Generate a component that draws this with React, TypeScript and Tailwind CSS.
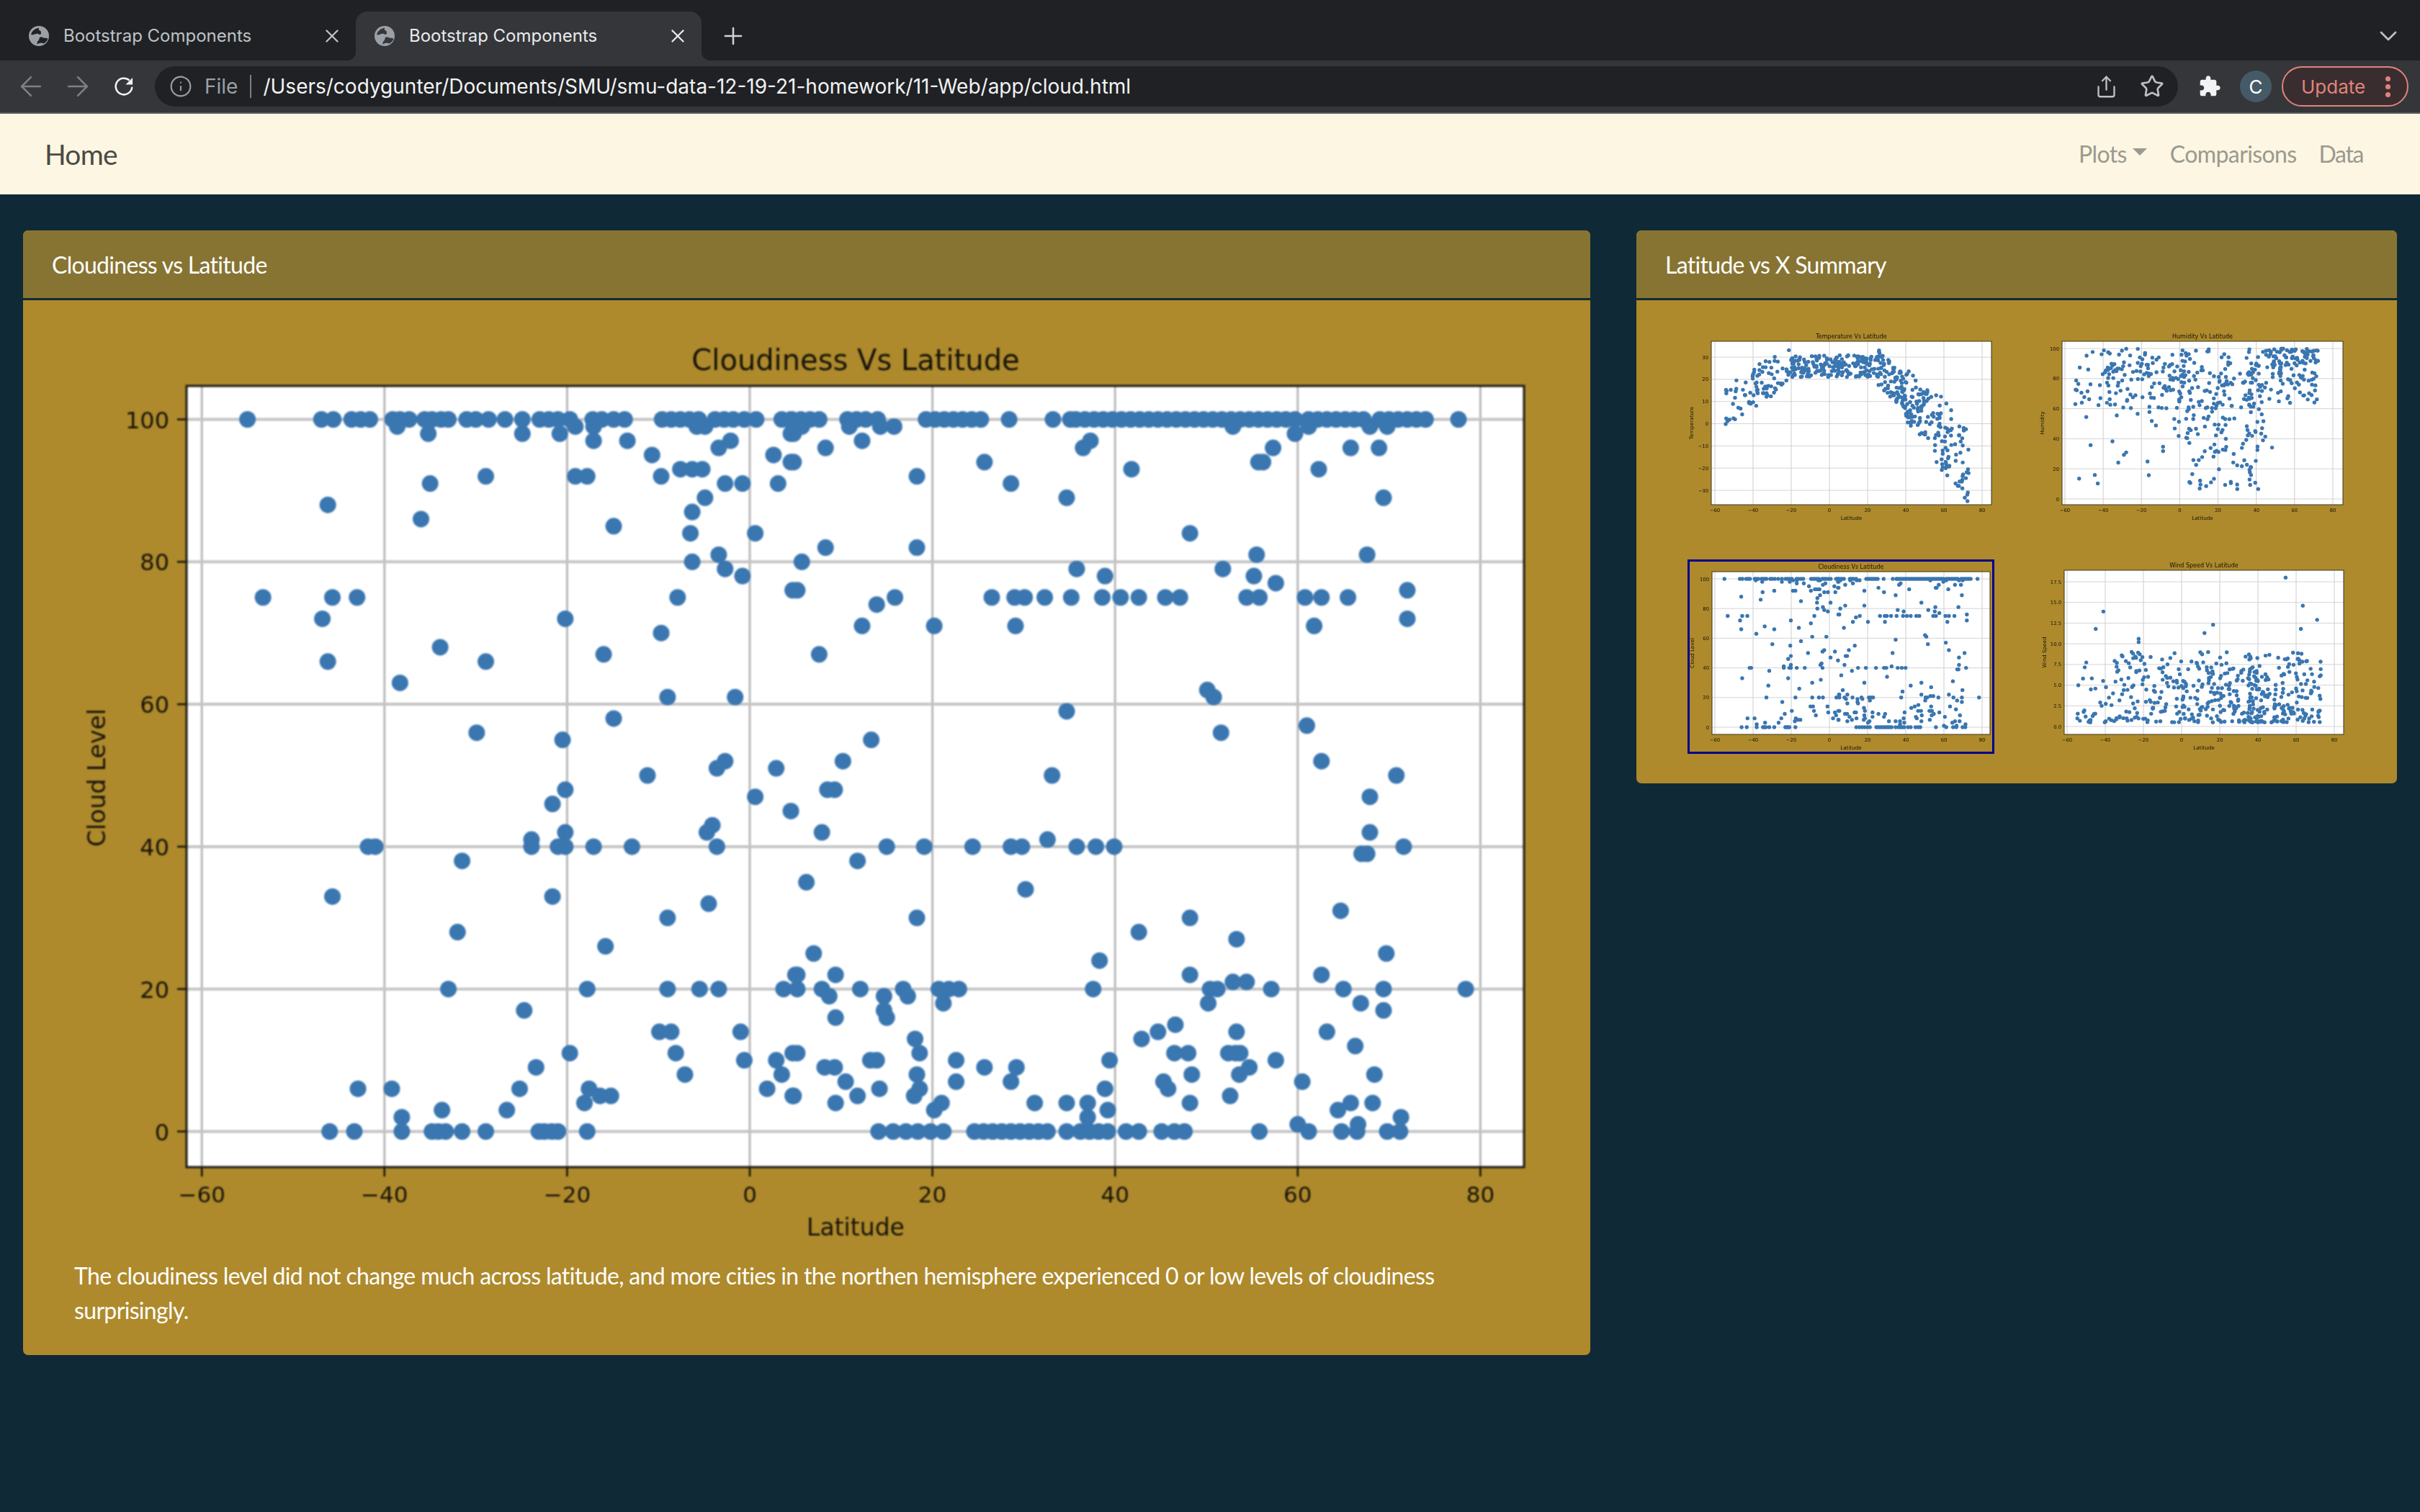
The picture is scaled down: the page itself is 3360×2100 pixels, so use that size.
import { ArrowLeft, ArrowRight, ChevronDown, Info, Plus, Share, Star, X } from "lucide-react";

const TICK_COLOR = "#16130a";
const DOT_COLOR = "#3a76b0";
const CHART_FONT = "DejaVu Sans";

const run = (from: number, to: number, step: number) => {
  const out: number[] = [];
  for (let v = from; v <= to; v += step) out.push(v);
  return out;
};

// cloud level -> latitudes, read off the plotted city data
const CLOUD_ROWS: [number, number[]][] = [
  [100, [-55, -46.9, -45.6, -43.6, -42.6, -41.6, -39.1, -38.3, -37.3, -35.6, -34.8, -33.8, -33, -31, -30, -28.6, -26.8, -24.9, -23, -22, -21, -19.7, -17.2, -16.2, -14.9, -13.7, -9.6, -8.6, -7.6, -6.6, -5.6, -3.8, -2.8, -1.8, -0.6, 0.7, 3.5, 4.5, ...run(4.6, 8.2, 1), ...run(10.7, 12.9, 1), 14, ...run(19.3, 25.7, 1), 28.4, 33.2, 35.1, ...run(35.7, 60, 1), ...run(61.2, 67.9, 1), ...run(69, 74.6, 1), 77.6]],
  [99, [-38.6, -19.1, -17.1, -5.8, -4.9, 4.8, 5.7, 10.9, 14.3, 15.8, 52.9, 61.2, 67.9, 69.8]],
  [98, [-35.2, -24.9, -20.8, 4.5, 4.8, 59.7]],
  [97, [-17.1, -13.4, -2.1, 12.3, 37.3]],
  [96, [-3.4, 8.3, 36.5, 57.3, 65.8, 68.9]],
  [95, [-10.7, 2.6]],
  [94, [4.5, 4.8, 25.7, 55.7, 56.2]],
  [93, [-7.6, -6.3, -5.2, 41.8, 62.3]],
  [92, [-28.9, -19.1, -17.8, -9.7, 18.3]],
  [91, [-35, -2.7, -0.8, 3.1, 28.6]],
  [89, [-4.9, 34.7, 69.4]],
  [88, [-46.2]],
  [87, [-6.3]],
  [86, [-36]],
  [85, [-14.9]],
  [84, [-6.5, 0.6, 48.2]],
  [82, [8.3, 18.3]],
  [81, [-3.4, 55.5, 67.6]],
  [80, [-6.3, 5.7]],
  [79, [-2.7, 35.8, 51.8]],
  [78, [-0.8, 38.9, 55.2]],
  [77, [57.6]],
  [76, [4.7, 5.2, 72]],
  [75, [-53.3, -45.7, -43, -7.9, 15.9, 26.5, 29, 30.1, 32.3, 35.2, 38.6, 40.6, 42.6, 45.5, 47.1, 54.4, 55.8, 60.8, 62.6, 65.5]],
  [74, [13.9]],
  [72, [-46.8, -20.2, 72]],
  [71, [12.3, 20.2, 29.1, 61.8]],
  [70, [-9.7]],
  [68, [-33.9]],
  [67, [-16, 7.6]],
  [66, [-46.2, -28.9]],
  [63, [-38.3]],
  [62, [50.1]],
  [61, [-9, -1.6, 50.8]],
  [59, [34.7]],
  [58, [-14.9]],
  [57, [61]],
  [56, [-29.9, 51.6]],
  [55, [-20.5, 13.3]],
  [52, [-2.7, 10.2, 62.6]],
  [51, [-3.6, 2.9]],
  [50, [-11.2, 33.1, 70.8]],
  [48, [-20.2, 8.5, 9.3]],
  [47, [0.6, 67.9]],
  [46, [-21.6]],
  [45, [4.5]],
  [43, [-4.1]],
  [42, [-20.2, -4.7, 7.9, 67.9]],
  [41, [-23.9, 32.6]],
  [40, [-41.8, -41, -23.9, -21, -20.2, -17.1, -12.9, -3.6, 15, 19.1, 24.4, 28.6, 29.8, 35.8, 37.9, 39.9, 71.6]],
  [39, [67, 67.6]],
  [38, [-31.5, 11.8]],
  [35, [6.2]],
  [34, [30.2]],
  [33, [-45.7, -21.6]],
  [32, [-4.5]],
  [31, [64.7]],
  [30, [-9, 18.3, 48.2]],
  [28, [-32, 42.6]],
  [27, [53.3]],
  [26, [-15.8]],
  [25, [7, 69.7]],
  [24, [38.3]],
  [22, [5, 5.2, 9.4, 48.2, 62.6]],
  [21, [52.9, 54.4]],
  [20, [-33, -17.8, -9, -5.5, -3.4, 3.7, 5.2, 7.9, 12.1, 16.8, 20.7, 21.8, 22.9, 37.6, 50.4, 51.2, 57.1, 65, 69.4, 78.4]],
  [19, [8.7, 14.7, 17.3]],
  [18, [21.2, 50.2, 66.9]],
  [17, [-24.7, 14.7, 69.4]],
  [16, [9.4, 15]],
  [15, [46.6]],
  [14, [-9.9, -8.6, -1, 44.7, 53.3, 63.2]],
  [13, [18.1, 42.9]],
  [12, [66.3]],
  [11, [-19.7, -8.1, 4.7, 5.2, 18.6, 46.5, 48, 52.4, 53.2, 53.7]],
  [10, [-0.6, 2.9, 13.2, 13.9, 22.6, 39.4, 57.6]],
  [9, [-23.4, 8.2, 9.3, 25.7, 29.2, 54.7]],
  [8, [-7.1, 3.5, 18.3, 48.4, 53.6, 68.4]],
  [7, [10.5, 22.6, 28.6, 45.3, 60.5]],
  [6, [-42.9, -39.2, -25.2, -17.6, 1.9, 14.2, 18.6, 38.9, 45.8]],
  [5, [-16.4, -15.2, 4.7, 4.8, 11.8, 18, 52.6]],
  [4, [-18.1, 9.4, 21, 31.2, 34.7, 37, 48.2, 65.8, 68.2]],
  [3, [-33.7, -26.6, 20.2, 39.2, 64.4]],
  [2, [-38.1, 37, 71.3]],
  [1, [60, 66.6]],
  [0, [-46, -43.3, -38.1, -34.8, -34.1, -33.3, -31.5, -28.9, -23.1, -22.5, -21.7, -21, -17.8, 14.1, 15.7, 17.1, 18.4, 19.8, 21.2, ...run(24.6, 32.9, 1), 34.7, ...run(36.2, 39.8, 1), 41.2, 42.6, 45.1, 46.5, 47.6, 55.8, 61.2, 64.8, 66.5, 69.8, 71.2]],
];

const CLOUD_POINTS: [number, number][] = CLOUD_ROWS.flatMap(([cloud, lats]) =>
  lats.map((lat): [number, number] => [lat, cloud]),
);

function seeded(seed: number) {
  let a = seed;
  return () => {
    a = (a + 0x6d2b79f5) | 0;
    let t = Math.imul(a ^ (a >>> 15), 1 | a);
    t = (t + Math.imul(t ^ (t >>> 7), 61 | t)) ^ t;
    return ((t ^ (t >>> 14)) >>> 0) / 4294967296;
  };
}

// latitude distribution of the city sample, heavier in the north
function randomLat(r: () => number) {
  const v = r();
  if (v < 0.05) return -55 + r() * 15;
  if (v < 0.32) return -40 + r() * 40;
  if (v < 0.66) return r() * 40;
  return 35 + r() * 38;
}

const tempCurve = (lat: number) => {
  if (lat < -40) return 8 + (lat + 55) * 0.5;
  if (lat < -20) return 16 + (lat + 40) * 0.55;
  if (lat < 25) return 26;
  if (lat < 50) return 26 - (lat - 25) * 0.85;
  return 5 - (lat - 50) * 1.1;
};

function buildTemperature(): [number, number][] {
  const r = seeded(11);
  return Array.from({ length: 520 }, () => {
    const lat = randomLat(r);
    const spread = lat > 55 ? 34 : lat > 40 ? 24 : lat > 25 ? 16 : lat < -20 ? 18 : 10;
    return [lat, tempCurve(lat) + (r() - 0.5) * spread] as [number, number];
  });
}

function buildHumidity(): [number, number][] {
  const r = seeded(23);
  return Array.from({ length: 520 }, () => {
    const lat = randomLat(r);
    const fade = lat + r() * 14;
    let h = 60 + Math.sqrt(r()) * 40;
    if (lat > 3 && fade < 52 && r() < 0.42) h = 6 + r() * 54;
    else if (lat < 0 && r() < 0.12) h = 10 + r() * 50;
    else if (lat < 45 && r() < 0.5) h = 60 + r() * 30;
    return [lat, Math.min(h, 100)] as [number, number];
  });
}

function buildWind(): [number, number][] {
  const r = seeded(37);
  return Array.from({ length: 500 }, () => {
    const lat = randomLat(r);
    const w = 0.5 + Math.pow(r(), 1.6) * 8.6;
    return [lat, w] as [number, number];
  });
}

const TEMP_POINTS = buildTemperature();
const HUMIDITY_POINTS = buildHumidity();
const WIND_POINTS: [number, number][] = [
  ...buildWind(),
  [54.5, 18],
  [-41, 13.9],
  [63.5, 14.6],
  [-45, 11.8],
  [16.5, 12.3],
  [71, 12.9],
  [62.5, 11.8],
  [12, 11.3],
  [-22.5, 10.6],
  [-22.5, 10.2],
];

function MainChart() {
  const left = 156;
  const right = 2013;
  const top = 79;
  const bottom = 1164;
  const xOf = (lat: number) => 938 + 12.68 * lat;
  const yOf = (c: number) => 1114.5 - 9.89 * c;

  return (
    <svg viewBox="0 0 2034 1291" className="block w-[2034px] h-[1291px] blur-[1px]">
      <rect x={left} y={top} width={right - left} height={bottom - top} fill="#fff" />
      {[-60, -40, -20, 0, 20, 40, 60, 80].map((lat) => (
        <g key={lat}>
          <line x1={xOf(lat)} x2={xOf(lat)} y1={top} y2={bottom} stroke="#b8b8b8" strokeWidth="3" />
          <line x1={xOf(lat)} x2={xOf(lat)} y1={bottom} y2={bottom + 13} stroke={TICK_COLOR} strokeWidth="2.5" />
          <text x={xOf(lat)} y={bottom + 49} textAnchor="middle" fontFamily={CHART_FONT} fontSize="31" fill={TICK_COLOR}>
            {lat < 0 ? `−${-lat}` : lat}
          </text>
        </g>
      ))}
      {[0, 20, 40, 60, 80, 100].map((c) => (
        <g key={c}>
          <line x1={left} x2={right} y1={yOf(c)} y2={yOf(c)} stroke="#c4c4c4" strokeWidth="4" />
          <line x1={left - 13} x2={left} y1={yOf(c)} y2={yOf(c)} stroke={TICK_COLOR} strokeWidth="2.5" />
          <text x={left - 24} y={yOf(c) + 12} textAnchor="end" fontFamily={CHART_FONT} fontSize="32" fill={TICK_COLOR}>
            {c}
          </text>
        </g>
      ))}
      {CLOUD_POINTS.map(([lat, c], i) => (
        <circle key={i} cx={xOf(lat)} cy={yOf(c)} r="11.5" fill={DOT_COLOR} />
      ))}
      <rect x={left} y={top} width={right - left} height={bottom - top} fill="none" stroke="#1c1a14" strokeWidth="3" />
      <text x="1085" y="57" textAnchor="middle" fontFamily={CHART_FONT} fontSize="40" fill={TICK_COLOR}>
        Cloudiness Vs Latitude
      </text>
      <text x="1085" y="1259" textAnchor="middle" fontFamily={CHART_FONT} fontSize="33" fill={TICK_COLOR}>
        Latitude
      </text>
      <text
        x="43"
        y="623"
        textAnchor="middle"
        fontFamily={CHART_FONT}
        fontSize="33"
        fill={TICK_COLOR}
        transform="rotate(-90 43 623)"
      >
        Cloud Level
      </text>
    </svg>
  );
}

type ThumbProps = {
  title: string;
  yLabel: string;
  points: [number, number][];
  box: [number, number, number, number];
  // pixel of lat -60 and lat 80
  xRange: [number, number];
  yTicks: number[];
  yRange: [number, number];
  decimals?: number;
  framed?: boolean;
};

function Thumb({ title, yLabel, points, box, xRange, yTicks, yRange, decimals = 0, framed }: ThumbProps) {
  const [left, top, right, bottom] = box;
  const xOf = (lat: number) => xRange[0] + ((lat + 60) / 140) * (xRange[1] - xRange[0]);
  const lo = yTicks[0];
  const hi = yTicks[yTicks.length - 1];
  const yOf = (v: number) => yRange[0] + ((v - lo) / (hi - lo)) * (yRange[1] - yRange[0]);
  const mid = (left + right) / 2;

  return (
    <svg
      viewBox={framed ? "0 0 420 264" : "0 0 426 270"}
      className={framed ? "block w-[420px] h-[264px] blur-[0.4px]" : "block w-[426px] h-[270px] blur-[0.4px]"}
    >
      <rect x={left} y={top} width={right - left} height={bottom - top} fill="#fff" />
      {[-60, -40, -20, 0, 20, 40, 60, 80].map((lat) => (
        <g key={lat}>
          <line x1={xOf(lat)} x2={xOf(lat)} y1={top} y2={bottom} stroke="#c2c2c2" strokeWidth="0.8" />
          <text x={xOf(lat)} y={bottom + 10} textAnchor="middle" fontFamily={CHART_FONT} fontSize="6.8" fill={TICK_COLOR}>
            {lat < 0 ? `−${-lat}` : lat}
          </text>
        </g>
      ))}
      {yTicks.map((t) => (
        <g key={t}>
          <line x1={left} x2={right} y1={yOf(t)} y2={yOf(t)} stroke="#cfcfcf" strokeWidth="0.9" />
          <text x={left - 4} y={yOf(t) + 2.5} textAnchor="end" fontFamily={CHART_FONT} fontSize="6.8" fill={TICK_COLOR}>
            {t < 0 ? `−${(-t).toFixed(decimals)}` : t.toFixed(decimals)}
          </text>
        </g>
      ))}
      {points.map(([lat, v], i) => (
        <circle key={i} cx={xOf(lat)} cy={yOf(v)} r="2.7" fill={DOT_COLOR} />
      ))}
      <rect x={left} y={top} width={right - left} height={bottom - top} fill="none" stroke="#3a3520" strokeWidth="1" />
      <text x={mid} y={top - 4} textAnchor="middle" fontFamily={CHART_FONT} fontSize="8" fill={TICK_COLOR}>
        {title}
      </text>
      <text x={mid} y={bottom + 21} textAnchor="middle" fontFamily={CHART_FONT} fontSize="7.2" fill={TICK_COLOR}>
        Latitude
      </text>
      <text
        x={left - 25}
        y={(top + bottom) / 2}
        textAnchor="middle"
        fontFamily={CHART_FONT}
        fontSize="7.2"
        fill={TICK_COLOR}
        transform={`rotate(-90 ${left - 25} ${(top + bottom) / 2})`}
      >
        {yLabel}
      </text>
    </svg>
  );
}

function GlobeIcon({ cut }: { cut: string }) {
  return (
    <svg viewBox="0 0 28 28" className="w-7 h-7 shrink-0">
      <circle cx="14" cy="14" r="14" fill="#9aa0a6" />
      <path
        d="M3 12C4.5 7 8 4 14 2.5C13 5 15 7 17 7.5C16 9.5 19 11.5 14.5 12C13 10 10 10.5 8 11.5C6 12.5 4.5 12.5 3 12Z"
        fill={cut}
      />
      <path
        d="M11.5 25.5C11 21 14.5 20.5 14.5 17.5C15 15.5 17 15 19 16C21 17 24 16.5 26.5 17.5C25.5 21 23 23.5 20 24.5C18 22.5 14 24 11.5 25.5Z"
        fill={cut}
      />
    </svg>
  );
}

function ReloadIcon() {
  return (
    <svg viewBox="0 0 24 24" className="ml-[25px] w-[34px] h-[34px] text-[#f1f3f4]" fill="none">
      <path d="M20 12.5a8 8 0 1 1-2.6-6.4" stroke="currentColor" strokeWidth="1.8" />
      <path d="M20.5 3.5v6.8h-6.8z" fill="currentColor" />
    </svg>
  );
}

function ExtensionIcon() {
  return (
    <svg viewBox="0 0 24 24" className="ml-[28px] w-[32px] h-[32px]" fill="#f1f3f4">
      <path d="M20.5 11H19V7c0-1.1-.9-2-2-2h-4V3.5C13 2.12 11.88 1 10.5 1S8 2.12 8 3.5V5H4c-1.1 0-1.99.9-1.99 2v3.8H3.5c1.49 0 2.7 1.21 2.7 2.7s-1.21 2.7-2.7 2.7H2V20c0 1.1.9 2 2 2h3.8v-1.5c0-1.49 1.21-2.7 2.7-2.7 1.49 0 2.7 1.21 2.7 2.7V22H17c1.1 0 2-.9 2-2v-4h1.5c1.38 0 2.5-1.12 2.5-2.5S21.88 11 20.5 11z" />
    </svg>
  );
}

function Tab({ active }: { active?: boolean }) {
  return (
    <div
      className={`relative flex items-center w-[480px] h-[68px] pl-[26px] pr-[18px] rounded-t-[16px] ${
        active ? "bg-[#35363a] text-[#e8eaed]" : "text-[#bdc1c6]"
      }`}
    >
      <GlobeIcon cut={active ? "#35363a" : "#202124"} />
      <span className="ml-[20px] flex-1 text-[24px] font-['Inter',sans-serif] whitespace-nowrap">
        Bootstrap Components
      </span>
      <X className="w-[30px] h-[30px]" strokeWidth={1.9} />
      {active && (
        <>
          <div className="absolute bottom-0 -left-[12px] w-3 h-3 bg-[#35363a]">
            <div className="w-3 h-3 bg-[#202124] rounded-br-[12px]" />
          </div>
          <div className="absolute bottom-0 -right-[12px] w-3 h-3 bg-[#35363a]">
            <div className="w-3 h-3 bg-[#202124] rounded-bl-[12px]" />
          </div>
        </>
      )}
    </div>
  );
}

function BrowserChrome() {
  return (
    <div className="font-['Inter',sans-serif]">
      <div className="flex items-end h-[84px] bg-[#202124] pl-[14px]">
        <Tab />
        <Tab active />
        <Plus className="self-center mt-[16px] ml-[25px] w-[38px] h-[38px] text-[#d0d3d7]" strokeWidth={1.6} />
        <ChevronDown className="self-center mt-[16px] ml-auto mr-[24px] w-[40px] h-[40px] text-[#bdc1c6]" strokeWidth={1.6} />
      </div>
      <div className="flex items-center h-[72px] bg-[#35363a] pl-[21px] pr-[16px]">
        <ArrowLeft className="w-[44px] h-[44px] text-[#7e8084]" strokeWidth={1.35} />
        <ArrowRight className="ml-[21px] w-[44px] h-[44px] text-[#7e8084]" strokeWidth={1.35} />
        <ReloadIcon />
        <div className="ml-[26px] flex items-center flex-1 h-[56px] rounded-full bg-[#202124] pl-[20px] pr-[19px]">
          <Info className="w-[32px] h-[32px] text-[#9aa0a6]" strokeWidth={1.6} />
          <span className="ml-[17px] text-[28px] text-[#9aa0a6]">File</span>
          <div className="ml-[17px] w-[2px] h-[32px] bg-[#7b7e82]" />
          <span className="ml-[16px] text-[28px] text-[#f1f3f4] whitespace-nowrap">
            /Users/codygunter/Documents/SMU/smu-data-12-19-21-homework/11-Web/app/cloud.html
          </span>
          <Share className="ml-auto w-[33px] h-[33px] text-[#bdc1c6]" strokeWidth={1.7} />
          <Star className="ml-[30px] w-[34px] h-[34px] text-[#bdc1c6]" strokeWidth={1.9} />
        </div>
        <ExtensionIcon />
        <div className="ml-[26px] flex items-center justify-center w-[44px] h-[44px] rounded-full bg-[#455a67] text-[26px] text-white">
          C
        </div>
        <div className="ml-[14px] flex items-center w-[176px] h-[56px] rounded-full border-[2px] border-[#e0847b] bg-[#3a2d2f] pl-[25px] text-[26px] text-[#e0847b]">
          Update
          <div className="ml-[28px] flex flex-col gap-[4px]">
            <div className="w-[7px] h-[7px] rounded-full bg-[#e0847b]" />
            <div className="w-[7px] h-[7px] rounded-full bg-[#e0847b]" />
            <div className="w-[7px] h-[7px] rounded-full bg-[#e0847b]" />
          </div>
        </div>
      </div>
      <div className="h-[2px] bg-[#5b5c60]" />
    </div>
  );
}

function Navbar() {
  return (
    <div className="flex items-center justify-between h-[112px] bg-[#fdf6e3] pl-[62px] pr-[79px] text-[32px] tracking-[-0.6px] font-['Lato',sans-serif]">
      <span className="text-[39px] tracking-[-0.8px] text-[#4c4a43]">Home</span>
      <div className="flex items-center text-[#9a9a8e]">
        <span>Plots</span>
        <div className="ml-[8px] mb-[6px] w-0 h-0 border-x-[10px] border-t-[10px] border-x-transparent border-t-[#9a9a8e]" />
        <span className="ml-[32px]">Comparisons</span>
        <span className="ml-[31px] tracking-[-1.4px]">Data</span>
      </div>
    </div>
  );
}

function CardHeader({ children }: { children: React.ReactNode }) {
  return (
    <div className="flex items-center h-[97px] px-[40px] pt-[2px] bg-[#877433] border-b-[3px] border-[#0f2a36] rounded-t-[7px] text-[32px] tracking-[-0.7px] text-white">
      {children}
    </div>
  );
}

export default function App() {
  return (
    <div className="min-h-[2100px] bg-[#0f2a36] font-['Lato',sans-serif]">
      <BrowserChrome />
      <Navbar />
      <div className="flex items-start gap-[64px] px-[32px] pt-[50px]">
        <div className="w-[2176px] bg-[#ae8a2c] rounded-[7px]">
          <CardHeader>Cloudiness vs Latitude</CardHeader>
          <div className="pl-[71px] pr-[71px] pt-[40px] pb-[38px]">
            <MainChart />
            <p className="text-[32px] leading-[48px] tracking-[-0.66px] text-white">
              The cloudiness level did not change much across latitude, and more cities in the northen hemisphere
              experienced 0 or low levels of cloudiness surprisingly.
            </p>
          </div>
        </div>
        <div className="w-[1056px] bg-[#ae8a2c] rounded-[7px]">
          <CardHeader>Latitude vs X Summary</CardHeader>
          <div className="grid grid-cols-[426px_426px] gap-x-[60px] gap-y-[50px] pl-[71px] pt-[40px] pb-[41px]">
            <Thumb
              title="Temperature Vs Latitude"
              yLabel="Temperature"
              points={TEMP_POINTS}
              box={[33, 17, 422, 244]}
              xRange={[38, 409]}
              yTicks={[30, 20, 10, 0, -10, -20, -30]}
              yRange={[39, 224]}
            />
            <Thumb
              title="Humidity Vs Latitude"
              yLabel="Humidity"
              points={HUMIDITY_POINTS}
              box={[34, 17, 424, 244]}
              xRange={[38, 410]}
              yTicks={[100, 80, 60, 40, 20, 0]}
              yRange={[27, 236]}
            />
            <div className="border-[3px] border-[#00008b] h-[270px]">
              <Thumb
                framed
                title="Cloudiness Vs Latitude"
                yLabel="Cloud Level"
                points={CLOUD_POINTS}
                box={[31, 14, 417, 240]}
                xRange={[35, 406]}
                yTicks={[100, 80, 60, 40, 20, 0]}
                yRange={[24, 230]}
              />
            </div>
            <Thumb
              title="Wind Speed Vs Latitude"
              yLabel="Wind Speed"
              points={WIND_POINTS}
              box={[37, 15, 425, 243]}
              xRange={[41, 412]}
              yTicks={[17.5, 15, 12.5, 10, 7.5, 5, 2.5, 0]}
              yRange={[31, 232]}
              decimals={1}
            />
          </div>
        </div>
      </div>
    </div>
  );
}
